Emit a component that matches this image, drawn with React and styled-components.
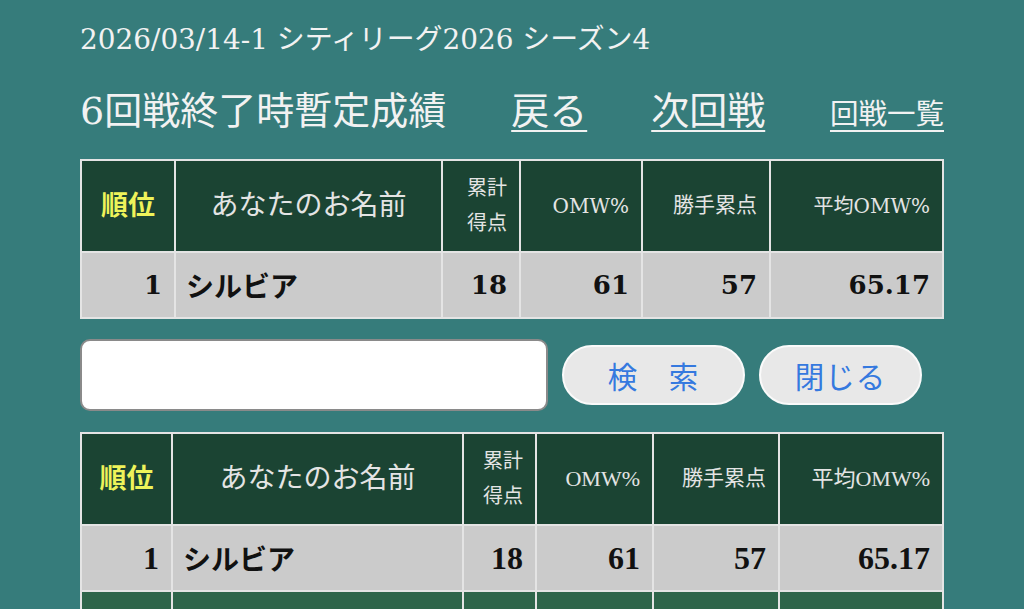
import React from 'react';
import styled, { createGlobalStyle } from 'styled-components';

const GlobalStyle = createGlobalStyle`
body {
    margin: 0;
    background-color: #367c7b;
    font-family: "DejaVu Serif", "Noto Sans CJK JP", serif;
}
`
const Page = styled.div`
box-sizing: border-box;
width: 1024px;
height: 609px;
overflow: hidden;
padding: 21px 80px 0 80px;
color: #f2f2f2;
`
const EventTitle = styled.div`
font-size: 27.9px;
line-height: 38px;
white-space: nowrap;
`
const NavRow = styled.div`
display: flex;
align-items: baseline;
margin-top: 26px;
height: 52px;
width: 864px;
white-space: nowrap;
`
const RoundTitle = styled.div`
font-size: 38px;
line-height: 52px;
`
const NavLink = styled.a`
color: #f2f2f2;
font-size: ${props => props.size || 38}px;
line-height: 52px;
text-decoration: underline;
text-underline-offset: 6px;
text-decoration-thickness: 2px;
margin-left: ${props => props.gap}px;
cursor: pointer;
`
const Table = styled.table`
table-layout: fixed;
width: 864px;
border-collapse: separate;
border-spacing: 2px;
background-color: #e4e4e4;
margin-top: ${props => props.top}px;
`
const Head = styled.th`
height: 90px;
padding: 0 12px;
background-color: #1b4433;
color: #e4e4e4;
font-weight: normal;
font-size: ${props => props.size || 21}px;
line-height: ${props => props.lh || 1.3};
text-align: ${props => props.align || 'right'};
font-family: ${props => props.narrow ? '"Liberation Serif", "Noto Sans CJK JP", serif' : 'inherit'};
`
const RankHead = styled(Head)`
color: #eef35a;
font-weight: bold;
`
const Cell = styled.td`
height: 64px;
padding: 0 12px 0 10px;
background-color: #cbcbcb;
color: #111;
font-weight: bold;
font-size: ${props => props.size || 26}px;
text-align: ${props => props.align || 'right'};
font-family: ${props => props.narrow ? '"Liberation Serif", "Noto Sans CJK JP", serif' : 'inherit'};
`
const EmptyCell = styled.td`
height: 64px;
background-color: #2e654a;
`
const SearchRow = styled.div`
display: flex;
align-items: center;
gap: 14px;
margin-top: 20px;
height: 72px;
`
const SearchInput = styled.input`
box-sizing: border-box;
width: 468px;
height: 72px;
border: 2px solid #8a8a8a;
border-radius: 10px;
background: #fff;
outline: none;
font-size: 26px;
padding: 0 14px;
`
const PillButton = styled.button`
box-sizing: border-box;
width: ${props => props.w}px;
height: 60px;
border: 2px solid #fafafa;
border-radius: 30px;
background-color: #e8e8e8;
color: #3579df;
font-family: "Noto Sans CJK JP", sans-serif;
font-size: 29.5px;
letter-spacing: 1px;
cursor: pointer;
`

const headers = ['順位', 'あなたのお名前', '累計得点', 'OMW%', '勝手累点', '平均OMW%']
const row = { rank: 1, name: 'シルビア', total: 18, omw: 61, katte: 57, avg: '65.17' }

const Standings = ({ widths, top, narrow, extraRow }) => (
    <Table top={top}>
        <colgroup>
            {widths.map((w, i) => <col key={i} style={{ width: w }} />)}
        </colgroup>
        <thead>
            <tr>
                <RankHead size={27} align="center">{headers[0]}</RankHead>
                <Head size={28} align="center">{headers[1]}</Head>
                <Head size={20} lh={1.75}>累計<br />得点</Head>
                <Head size={narrow ? 22 : 20} narrow={narrow}>{headers[3]}</Head>
                <Head size={21}>{headers[4]}</Head>
                <Head size={narrow ? 22 : 20} narrow={narrow}>{headers[5]}</Head>
            </tr>
        </thead>
        <tbody>
            <tr>
                <Cell size={narrow ? 32 : 26} narrow={narrow}>{row.rank}</Cell>
                <Cell size={28} align="left">{row.name}</Cell>
                <Cell size={narrow ? 32 : 26} narrow={narrow}>{row.total}</Cell>
                <Cell size={narrow ? 32 : 26} narrow={narrow}>{row.omw}</Cell>
                <Cell size={narrow ? 32 : 26} narrow={narrow}>{row.katte}</Cell>
                <Cell size={narrow ? 32 : 26} narrow={narrow}>{row.avg}</Cell>
            </tr>
            {extraRow && (
                <tr>
                    {widths.map((w, i) => <EmptyCell key={i} />)}
                </tr>
            )}
        </tbody>
    </Table>
)

const App = () => {
    return (
        <Page>
            <GlobalStyle />
            <EventTitle>2026/03/14-1 シティリーグ2026 シーズン4</EventTitle>
            <NavRow>
                <RoundTitle>6回戦終了時暫定成績</RoundTitle>
                <NavLink gap={65}>戻る</NavLink>
                <NavLink gap={64}>次回戦</NavLink>
                <NavLink gap={0} size={28.5} style={{ marginLeft: 'auto' }}>回戦一覧</NavLink>
            </NavRow>
            <Standings widths={[92, 265, 76, 120, 126, 171]} top={22} />
            <SearchRow>
                <SearchInput type="text" />
                <PillButton w={183}>検　索</PillButton>
                <PillButton w={163}>閉じる</PillButton>
            </SearchRow>
            <Standings widths={[89, 289, 71, 115, 124, 162]} top={21} narrow extraRow />
        </Page>
    )
}

export default App
